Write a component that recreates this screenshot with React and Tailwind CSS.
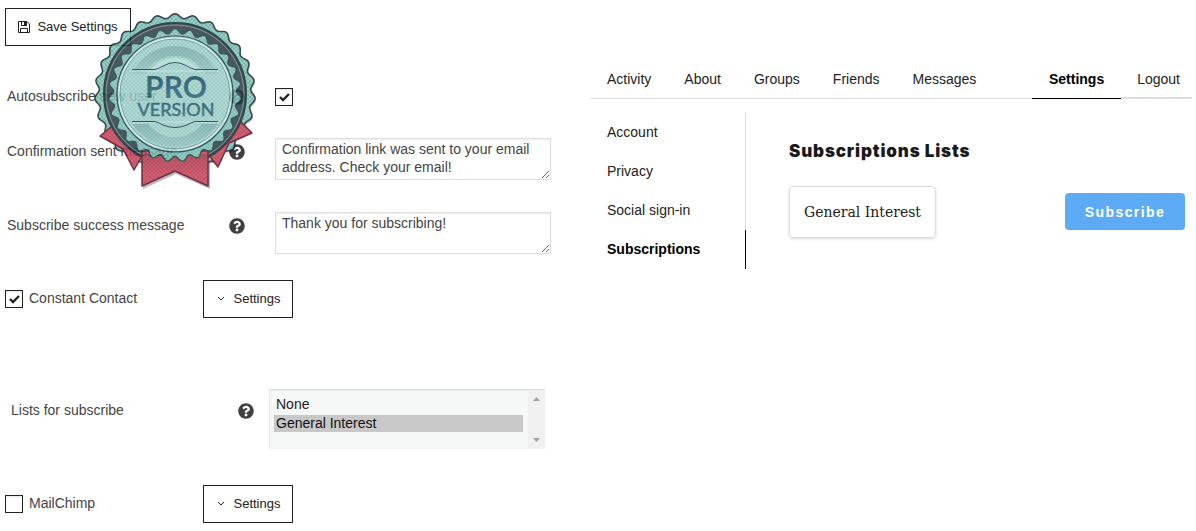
import { useState } from 'react'
import clsx from 'clsx'
import { FaQuestionCircle } from 'react-icons/fa'

const tabs = ['Activity', 'About', 'Groups', 'Friends', 'Messages']
const sideLinks = ['Account', 'Privacy', 'Social sign-in', 'Subscriptions']

// closed wavy ring around 0,0
function scallop(radius, depth, count) {
  const steps = count * 12
  const points = Array.from({ length: steps }, (_, i) => {
    const a = (i / steps) * Math.PI * 2
    const r = radius + depth * Math.cos(count * (a + Math.PI / 2))
    return `${(r * Math.cos(a)).toFixed(2)} ${(r * Math.sin(a)).toFixed(2)}`
  })
  return `M${points.join('L')}Z`
}

const outerRing = scallop(78, 2.2, 27)
const innerRing = scallop(64, 2.6, 27)

function ProBadge() {
  return (
    <svg viewBox="-84 -84 168 184" className="w-[168px] h-[184px]" role="img" aria-label="Pro version">
      <defs>
        <pattern id="teal" width="4" height="4" patternUnits="userSpaceOnUse">
          <rect width="4" height="4" fill="#85c8bd" />
          <path d="M0 0h2v2H0zM2 2h2v2H2z" fill="#66aca2" />
        </pattern>
        <pattern id="face" width="4" height="4" patternUnits="userSpaceOnUse">
          <rect width="4" height="4" fill="#a6d5cf" />
          <path d="M0 0h2v2H0zM2 2h2v2H2z" fill="#8bc0ba" />
        </pattern>
        <pattern id="red" width="4" height="4" patternUnits="userSpaceOnUse">
          <rect width="4" height="4" fill="#cd4459" />
          <path d="M0 0h2v2H0zM2 2h2v2H2z" fill="#b5384c" />
        </pattern>
        <linearGradient id="ink" x1="0" y1="0" x2="0" y2="1">
          <stop offset="0" stopColor="#0c4258" />
          <stop offset="1" stopColor="#2b6a7d" />
        </linearGradient>
        <linearGradient id="fold" x1="0" y1="0" x2="0" y2="1">
          <stop offset="0" stopColor="#6b2432" stopOpacity="0.4" />
          <stop offset="1" stopColor="#6b2432" stopOpacity="0" />
        </linearGradient>
        <linearGradient id="shade" x1="0" y1="0" x2="0" y2="1">
          <stop offset="0" stopColor="#5c9396" stopOpacity="0.6" />
          <stop offset="1" stopColor="#5c9396" stopOpacity="0.2" />
        </linearGradient>
      </defs>

      <g opacity="0.85">
        <path d={outerRing} fill="#000" opacity="0.2" transform="translate(1 2)" />
        <path d="M-33 60V93L0 78L34 93V60Z" fill="#000" opacity="0.3" transform="translate(1 2)" />
        <path d={outerRing} fill="url(#teal)" stroke="#152a30" strokeWidth="1.6" />
        <g fill="url(#red)" stroke="#570f23" strokeWidth="1.5" strokeLinejoin="round">
          <path d="M-75 42L-58 28L-33 62L-41 76L-52 55Z" />
          <path d="M77 39L66 28L33 60L43 73L54 49Z" />
        </g>
        <circle r="71" fill="#273d43" stroke="#12242a" strokeWidth="2" />
        <circle r="69" fill="none" stroke="#70888a" strokeWidth="1" />
        <path d="M-33 57V92L0 77L33 92V57Z" fill="url(#red)" stroke="#570f23" strokeWidth="1.5" strokeLinejoin="round" />
        <path d="M-32 60H32V80H-32Z" fill="url(#fold)" />
        <path d={innerRing} fill="url(#teal)" stroke="#20383f" strokeWidth="1.4" transform="translate(0 1)" />
        <circle r="58" fill="url(#face)" stroke="#173540" strokeWidth="1.2" />
        <circle r="56" fill="none" stroke="#dff3ef" strokeWidth="1.5" opacity="0.7" />
        <circle r="55" fill="none" stroke="#3d717a" strokeWidth="0.6" />

        <path d="M-43 -20A47 47 0 0 1 43 -20H30A34 34 0 0 0 -30 -20Z" fill="url(#shade)" />
        <path d="M-43 30A52 52 0 0 0 43 30H27A34 34 0 0 1 -27 30Z" fill="url(#shade)" />
        <path d="M-24 -24A30 30 0 0 1 24 -24H18Q14 -25 11 -28Q0 -33 -11 -28Q-14 -25 -18 -24Z" fill="#b9e0db" opacity="0.7" />
        <path d="M-43 -23H43M-43 28H43" stroke="#d9f0ec" strokeWidth="1" opacity="0.6" />
        <path
          d="M-43 -24.5H-20Q-15 -26 -12 -28Q0 -35 12 -28Q15 -26 20 -24.5H43M-43 27.5H-20Q-15 29 -12 31Q0 36 12 31Q15 29 20 27.5H43"
          fill="none"
          stroke="#143646"
          strokeWidth="1"
        />
        <g textAnchor="middle" fontFamily="Lato, sans-serif" fill="url(#ink)">
          <text x="1" y="4" fontSize="30" fontWeight="700">PRO</text>
          <text x="1" y="22" fontSize="18" fontWeight="400" stroke="#235e70" strokeWidth="0.5">VERSION</text>
        </g>
      </g>
    </svg>
  )
}

function SaveIcon() {
  return (
    <svg viewBox="0 0 12 12" className="w-3 h-3" fill="none" stroke="currentColor" aria-hidden="true">
      <path d="M0.5 0.5H9L11.5 3V11.5H0.5Z" />
      <path d="M3.5 0.5V4.5H8.5V0.5M2.5 11.5V7.5H9.5V11.5" />
      <path d="M6 1H8V4H6Z" fill="currentColor" stroke="none" />
    </svg>
  )
}

function Checkbox({ id, defaultChecked }) {
  return (
    <span className="relative inline-flex w-[18px] h-[18px] shrink-0">
      <input
        id={id}
        type="checkbox"
        defaultChecked={defaultChecked}
        className="peer appearance-none w-full h-full border border-[#222] bg-white shadow-[inset_0_1px_2px_rgba(0,0,0,0.1)]"
      />
      <svg
        viewBox="0 0 18 18"
        className="absolute inset-0 hidden peer-checked:block pointer-events-none"
        fill="none"
        stroke="#222"
        strokeWidth="2.4"
        aria-hidden="true"
      >
        <path d="M5 9L8 12L14 6" />
      </svg>
    </span>
  )
}

function Help() {
  return <FaQuestionCircle className="w-4 h-4 text-[#404040]" aria-label="Help" />
}

function MessageRow({ id, label, value }) {
  return (
    <div className="grid grid-cols-[222px_46px_276px] items-start pl-[7px]">
      <label htmlFor={id} className="pt-[3px]">{label}</label>
      <span className="pt-[6px]"><Help /></span>
      <textarea
        id={id}
        defaultValue={value}
        className="block h-[42px] border border-[#ddd] px-[6px] py-px leading-[18px] resize-y overflow-hidden shadow-[inset_0_1px_2px_rgba(0,0,0,0.07)]"
      />
    </div>
  )
}

function ServiceRow({ id, label, defaultChecked }) {
  return (
    <div className="grid grid-cols-[198px_90px] items-center pl-[5px]">
      <div className="flex items-center gap-[6px]">
        <Checkbox id={id} defaultChecked={defaultChecked} />
        <label htmlFor={id} className="pb-[2px]">{label}</label>
      </div>
      <button type="button" className="flex items-center justify-center gap-2 h-[38px] border border-[#222] text-[13px] text-[#222]">
        <svg viewBox="0 0 10 10" className="w-[10px] h-[10px]" fill="none" stroke="currentColor" aria-hidden="true">
          <path d="M2 3L5 6L8 3" />
        </svg>
        Settings
      </button>
    </div>
  )
}

function AdminSettings() {
  return (
    <form className="relative text-sm text-[#444]">
      <div className="pt-2 pl-[5px]">
        <button type="button" className="flex items-center justify-center gap-[7px] w-[126px] h-[38px] border border-[#222] text-[13px] text-[#222]">
          <SaveIcon />
          Save Settings
        </button>
      </div>

      <div className="mt-10 grid grid-cols-[222px_46px_276px] items-center pl-[7px]">
        <label htmlFor="autosubscribe" className="pb-[2px]">Autosubscribe new user</label>
        <Help />
        <Checkbox id="autosubscribe" defaultChecked />
      </div>
      <div className="mt-[30px] flex flex-col gap-8">
        <MessageRow
          id="confirmation"
          label="Confirmation sent message"
          value="Confirmation link was sent to your email address. Check your email!"
        />
        <MessageRow id="success" label="Subscribe success message" value="Thank you for subscribing!" />
      </div>

      <div className="mt-[26px]">
        <ServiceRow id="constant-contact" label="Constant Contact" defaultChecked />
      </div>

      <div className="mt-[71px] grid grid-cols-[227px_31px_276px] items-start pl-[11px]">
        <label htmlFor="lists" className="pt-[11px]">Lists for subscribe</label>
        <span className="pt-[14px]"><Help /></span>
        <div className="flex h-[60px] bg-[#f6f8f8] border-t border-[#ddd] shadow-[inset_1px_1px_2px_rgba(0,0,0,0.06)]">
          <select id="lists" multiple size={2} defaultValue={['general']} className="flex-1 px-[5px] pt-[6px] overflow-hidden text-[#222] bg-transparent">
            <option value="none" className="h-4 mb-[2px] px-[2px] py-0 leading-4">None</option>
            <option value="general" className="h-4 px-[2px] py-0 leading-4 checked:bg-[#c8c8c8]">General Interest</option>
          </select>
          <div className="flex flex-col justify-between items-center w-[17px] py-[7px] bg-[#f0f0f0]" aria-hidden="true">
            <svg viewBox="0 0 7 4" className="w-[7px] h-1 fill-[#a3a3a3]"><path d="M0 4L3.5 0L7 4Z" /></svg>
            <svg viewBox="0 0 7 4" className="w-[7px] h-1 fill-[#a3a3a3]"><path d="M0 0L3.5 4L7 0Z" /></svg>
          </div>
        </div>
      </div>

      <div className="mt-9">
        <ServiceRow id="mailchimp" label="MailChimp" />
      </div>

      <div className="absolute left-[91px] top-[10px] pointer-events-none">
        <ProBadge />
      </div>
    </form>
  )
}

function Profile() {
  const [active, setActive] = useState('Subscriptions')

  return (
    <div className="pt-[60px] pr-1 text-sm text-[#222]">
      <nav className="flex items-stretch h-[39px] border-b border-[#ddd]">
        <div className="flex items-center gap-[33px] pl-[17px]">
          {tabs.map((tab) => (
            <a key={tab} href="#">{tab}</a>
          ))}
        </div>
        <div className="flex items-stretch ml-auto -mb-px">
          <a href="#" className="flex items-center px-[17px] pb-px border-b border-black font-bold text-black">Settings</a>
          <a href="#" className="flex items-center pl-4 pr-3 border-b-2 border-[#ddd]">Logout</a>
        </div>
      </nav>

      <div className="flex items-start mt-[14px]">
        <nav className="flex flex-col w-[156px]">
          {sideLinks.map((link) => (
            <a
              key={link}
              href="#"
              onClick={() => setActive(link)}
              className={clsx(
                'flex items-center h-[39px] pl-[17px] pb-[2px] border-r',
                active === link ? 'font-bold text-black border-black' : 'border-[#ddd]'
              )}
            >
              {link}
            </a>
          ))}
        </nav>

        <section className="flex-1 pl-[43px] pr-[7px] pt-[26px]">
          <h2 className="text-[17px] leading-6 font-black tracking-wider font-['Inter',sans-serif] text-[#1a1a1a]">Subscriptions Lists</h2>
          <div className="flex items-start justify-between mt-[23px]">
            <div className="px-[14px] h-[52px] flex items-center border border-[#ddd] rounded shadow-[0_1px_3px_rgba(0,0,0,0.15)] font-['DejaVu_Serif',serif] text-[14px]">
              General Interest
            </div>
            <button type="button" className="mt-[7px] w-[120px] h-[37px] rounded bg-[#5dabf5] text-white font-bold tracking-widest">
              Subscribe
            </button>
          </div>
        </section>
      </div>
    </div>
  )
}

export default function App() {
  return (
    <main className="grid grid-cols-[590px_1fr] min-h-screen bg-white font-['Liberation_Sans',Arial,sans-serif]">
      <AdminSettings />
      <Profile />
    </main>
  )
}
